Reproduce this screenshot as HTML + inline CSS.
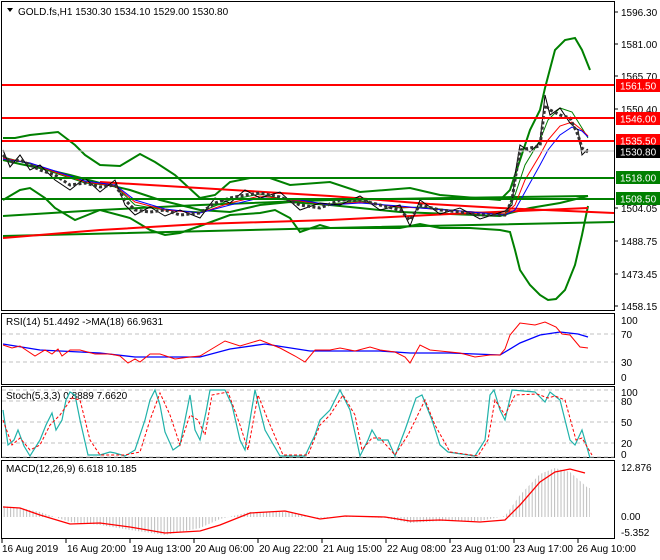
<!DOCTYPE html>
<html><head><meta charset="utf-8"><style>
html,body{margin:0;padding:0;background:#fff;}
svg{display:block;font-family:"Liberation Sans",sans-serif;font-size:10px;}
</style></head><body>
<svg width="660" height="560" viewBox="0 0 660 560" xmlns="http://www.w3.org/2000/svg">
<defs>
<pattern id="hp" width="3.2" height="10" patternUnits="userSpaceOnUse"><line x1="1" x2="1" y1="0" y2="10" stroke="#bdbdbd" stroke-width="1"/></pattern>
</defs>
<rect width="660" height="560" fill="#fff"/>
<g fill="none" stroke="#000" stroke-width="1">
<rect x="1.5" y="1.5" width="613" height="309"/>
<rect x="1.5" y="313.5" width="613" height="71"/>
<rect x="1.5" y="386.5" width="613" height="71"/>
<rect x="1.5" y="460.5" width="613" height="78"/>
</g>
<!-- bands -->
<g fill="none" stroke="#008000" stroke-width="2">
<polyline points="3,138 15,138 30,135 58,132 75,145 85,155 100,165 120,166 140,154 155,162 175,175 200,198 215,195 230,182 250,178 270,178 290,185 330,182 360,192 410,188 440,195 500,200 510,190 520,160 530,130 540,110 545,88 555,50 565,40 575,38 582,50 590,70"/>
<polyline points="3,200 20,190 30,188 45,198 55,208 70,217 75,220 100,210 130,218 150,230 165,235 180,233 200,226 230,215 260,213 275,210 290,218 300,232 320,225 330,228 360,228 400,228 420,224 440,228 470,228 500,230 510,232 515,250 520,270 530,285 540,295 548,300 556,299 565,290 575,265 582,235 588,206"/>
<polyline points="3,160 20,164 40,168 70,175 100,183 130,190 160,200 200,210 230,212 260,205 290,202 330,205 360,208 400,212 450,214 500,216 510,213 530,208 560,203 588,196"/>
<polyline points="3,216 100,210 200,205 330,200 450,198 588,196"/>
<polyline points="3,236 330,228 614,222"/>
</g>
<g fill="none" stroke="#ff0000" stroke-width="2">
<polyline points="100,182 330,196 430,204 500,208 614,213"/>
<polyline points="3,238 100,230 200,224 330,220 450,214 588,208"/>
</g>
<!-- MAs -->
<polyline fill="none" stroke="#008000" stroke-width="1" points="3,157 30,164 55,173 85,183 115,186 135,205 165,210 200,212 230,200 260,194 300,203 330,204 360,201 400,208 420,207 460,211 505,214 515,195 525,165 540,140 548,120 560,108 572,112 582,128 588,138"/>
<polyline fill="none" stroke="#ff0000" stroke-width="1" points="3,158 30,163 55,172 85,182 115,186 135,202 165,210 200,213 230,203 260,196 300,201 330,205 360,202 400,207 420,208 460,211 505,214 515,205 525,180 540,155 548,140 560,126 572,122 582,130 588,136"/>
<polyline fill="none" stroke="#0000ff" stroke-width="1" points="3,159 30,163 55,171 85,181 115,185 135,200 165,209 200,213 230,205 260,198 300,200 330,205 360,203 400,206 420,208 460,211 505,215 515,210 525,192 540,165 548,150 560,135 572,127 582,131 588,137"/>
<!-- price candles approximation -->
<polyline fill="none" stroke="#000" stroke-width="1" points="3,150 10,167 20,155 30,170 40,165 55,180 70,190 85,178 100,192 115,180 125,205 135,215 150,207 165,216 180,210 200,218 215,198 230,203 245,190 260,198 280,192 300,210 320,203 340,205 360,196 380,210 400,205 410,226 420,200 440,214 460,208 480,219 505,211 512,205 515,175 520,145 530,152 540,142 545,95 550,115 560,108 570,123 578,130 582,155 588,149"/>
<polyline fill="none" stroke="#333" stroke-width="3" stroke-dasharray="3,2.3" points="3,155 10,162 20,160 30,165 40,170 55,175 70,185 85,183 100,187 115,185 125,200 135,210 150,212 165,210 180,215 200,213 215,203 230,198 245,195 260,193 280,197 300,205 320,208 340,200 360,200 380,205 400,210 410,220 420,205 440,210 460,212 480,215 505,215 512,200 515,180 520,150 530,148 540,146 545,105 550,110 560,115 570,118 578,135 582,148 588,152"/>
<!-- levels -->
<line x1="2" x2="614" y1="151" y2="151" stroke="#c0c0c0"/>
<g stroke="#ff0000" stroke-width="2">
<line x1="2" x2="614" y1="85" y2="85"/>
<line x1="2" x2="614" y1="118" y2="118"/>
<line x1="2" x2="614" y1="141" y2="141"/>
</g>
<g stroke="#008000" stroke-width="2">
<line x1="2" x2="614" y1="178" y2="178"/>
<line x1="2" x2="614" y1="199" y2="199"/>
</g>
<path d="M7 8 L13 8 L10 12 Z" fill="#000"/>
<text x="18" y="15" fill="#000">GOLD.fs,H1  1530.30 1534.10 1529.00 1530.80</text>
<g fill="#000">
<text x="621" y="16">1596.30</text>
<text x="621" y="48">1581.00</text>
<text x="621" y="80">1565.70</text>
<text x="621" y="113">1550.40</text>
<text x="621" y="212">1504.05</text>
<text x="621" y="245">1488.75</text>
<text x="621" y="278">1473.45</text>
<text x="621" y="310">1458.15</text>
</g>
<g stroke="#000"><line x1="614" x2="618" y1="12" y2="12"/><line x1="614" x2="618" y1="44" y2="44"/><line x1="614" x2="618" y1="76" y2="76"/><line x1="614" x2="618" y1="109" y2="109"/><line x1="614" x2="618" y1="208" y2="208"/><line x1="614" x2="618" y1="241" y2="241"/><line x1="614" x2="618" y1="274" y2="274"/><line x1="614" x2="618" y1="306" y2="306"/></g>
<rect x="616" y="79" width="44" height="13" fill="#ff0000"/><text x="620" y="89.5" fill="#fff">1561.50</text>
<rect x="616" y="112" width="44" height="13" fill="#ff0000"/><text x="620" y="122.5" fill="#fff">1546.00</text>
<rect x="616" y="134" width="44" height="13" fill="#ff0000"/><text x="620" y="144.5" fill="#fff">1535.50</text>
<rect x="616" y="145" width="44" height="13" fill="#000"/><text x="620" y="155.5" fill="#fff">1530.80</text>
<rect x="616" y="171" width="44" height="13" fill="#008000"/><text x="620" y="181.5" fill="#fff">1518.00</text>
<rect x="616" y="192" width="44" height="13" fill="#008000"/><text x="620" y="202.5" fill="#fff">1508.50</text>
<!-- RSI -->
<g stroke="#c0c0c0" stroke-dasharray="4,3"><line x1="2" x2="614" y1="334" y2="334"/><line x1="2" x2="614" y1="362" y2="362"/></g>
<text x="6" y="325" fill="#000">RSI(14) 51.4492  -&gt;MA(18) 66.9631</text>
<g fill="#000"><text x="621" y="324">100</text><text x="621" y="338">70</text><text x="621" y="366">30</text><text x="621" y="381">0</text></g>
<polyline fill="none" stroke="#0000ff" stroke-width="1.3" points="3,344 40,350 100,353 135,357 200,357 230,349 265,344 310,351 380,351 410,353 450,353 500,355 520,343 540,335 560,332 578,334 588,337"/>
<polyline fill="none" stroke="#ff0000" stroke-width="1" points="3,345 12,348 20,346 35,356 45,350 52,354 58,349 62,356 70,350 80,350 95,354 110,354 120,356 128,363 135,359 140,362 150,354 160,354 175,359 190,357 200,356 210,350 225,341 240,346 260,340 280,348 295,356 305,362 315,350 330,350 340,348 355,351 370,347 380,350 395,352 405,357 410,363 420,345 430,350 440,351 460,353 475,357 490,355 500,355 505,349 510,335 520,323 535,325 545,322 556,327 562,334 570,335 580,347 588,348"/>
<!-- Stoch -->
<g stroke="#c0c0c0" stroke-dasharray="4,3"><line x1="2" x2="614" y1="401" y2="401"/><line x1="2" x2="614" y1="422" y2="422"/><line x1="2" x2="614" y1="443" y2="443"/><line x1="2" x2="614" y1="390" y2="390"/><line x1="2" x2="614" y1="457" y2="457"/></g>
<text x="6" y="399" fill="#000">Stoch(5,3,3) 0.8889 7.6620</text>
<g fill="#000"><text x="621" y="396">100</text><text x="621" y="405">80</text><text x="621" y="426">50</text><text x="621" y="447">20</text><text x="621" y="458">0</text></g>
<polyline fill="none" stroke="#20b2aa" stroke-width="1.2" points="3,410 8,445 14,440 18,430 24,446 30,456 40,440 46,425 52,413 56,430 62,420 66,400 70,392 75,395 80,420 88,455 100,455 110,452 115,453 125,456 135,450 145,420 150,400 155,390 160,405 165,432 173,450 180,445 187,410 190,395 195,430 200,440 206,412 210,390 225,390 232,405 240,440 245,450 250,420 255,390 260,410 265,430 280,456 305,456 315,435 320,420 330,410 340,390 350,410 360,456 368,440 372,430 378,440 388,440 395,456 405,430 416,398 422,395 432,420 440,445 448,452 475,456 485,440 490,395 494,390 500,410 505,420 512,390 535,392 545,402 550,392 560,400 570,440 575,445 582,430 590,458"/>
<polyline fill="none" stroke="#ff0000" stroke-width="1" stroke-dasharray="3,2" points="3,420 12,445 20,438 30,450 40,445 50,425 60,415 72,398 80,400 90,440 100,455 125,455 140,452 150,420 160,393 170,415 180,445 190,415 198,420 205,435 212,395 228,392 240,425 248,450 258,395 268,420 283,455 308,455 320,425 330,415 343,395 355,415 362,450 372,438 380,438 395,455 408,435 425,400 435,425 450,452 478,456 488,440 495,400 505,415 515,395 537,394 548,398 555,396 565,400 576,440 582,438 592,455"/>
<!-- MACD -->
<text x="6" y="472" fill="#000">MACD(12,26,9) 6.618 10.185</text>
<g fill="#000"><text x="621" y="471">12.876</text><text x="621" y="520">0.00</text><text x="621" y="536">-5.352</text></g>
<polygon fill="url(#hp)" points="3,517 3,506 20,508 40,512 70,522 100,525 130,530 165,535 200,528 220,519 250,512 285,512 320,518 345,516 385,518 410,523 440,521 480,521 505,516 520,495 540,474 555,468 570,472 588,488 590,488 590,517"/>
<polyline fill="none" stroke="#ff0000" stroke-width="1.3" points="3,507 20,508 40,515 70,524 100,523 130,527 165,533 200,531 220,525 250,513 285,511 320,519 345,516 385,517 410,521 440,520 480,522 505,520 520,505 540,482 555,472 570,469 585,473"/>
<g stroke="#000"><line x1="2" x2="2" y1="539" y2="543"/><line x1="66" x2="66" y1="539" y2="543"/><line x1="130" x2="130" y1="539" y2="543"/><line x1="194" x2="194" y1="539" y2="543"/><line x1="258" x2="258" y1="539" y2="543"/><line x1="322" x2="322" y1="539" y2="543"/><line x1="386" x2="386" y1="539" y2="543"/><line x1="450" x2="450" y1="539" y2="543"/><line x1="514" x2="514" y1="539" y2="543"/><line x1="578" x2="578" y1="539" y2="543"/></g>
<g fill="#000">
<text x="2" y="552">16 Aug 2019</text><text x="67" y="552">16 Aug 20:00</text><text x="132" y="552">19 Aug 13:00</text><text x="195" y="552">20 Aug 06:00</text><text x="259" y="552">20 Aug 22:00</text><text x="323" y="552">21 Aug 15:00</text><text x="387" y="552">22 Aug 08:00</text><text x="451" y="552">23 Aug 01:00</text><text x="514" y="552">23 Aug 17:00</text><text x="577" y="552">26 Aug 10:00</text>
</g>
</svg>
</body></html>
